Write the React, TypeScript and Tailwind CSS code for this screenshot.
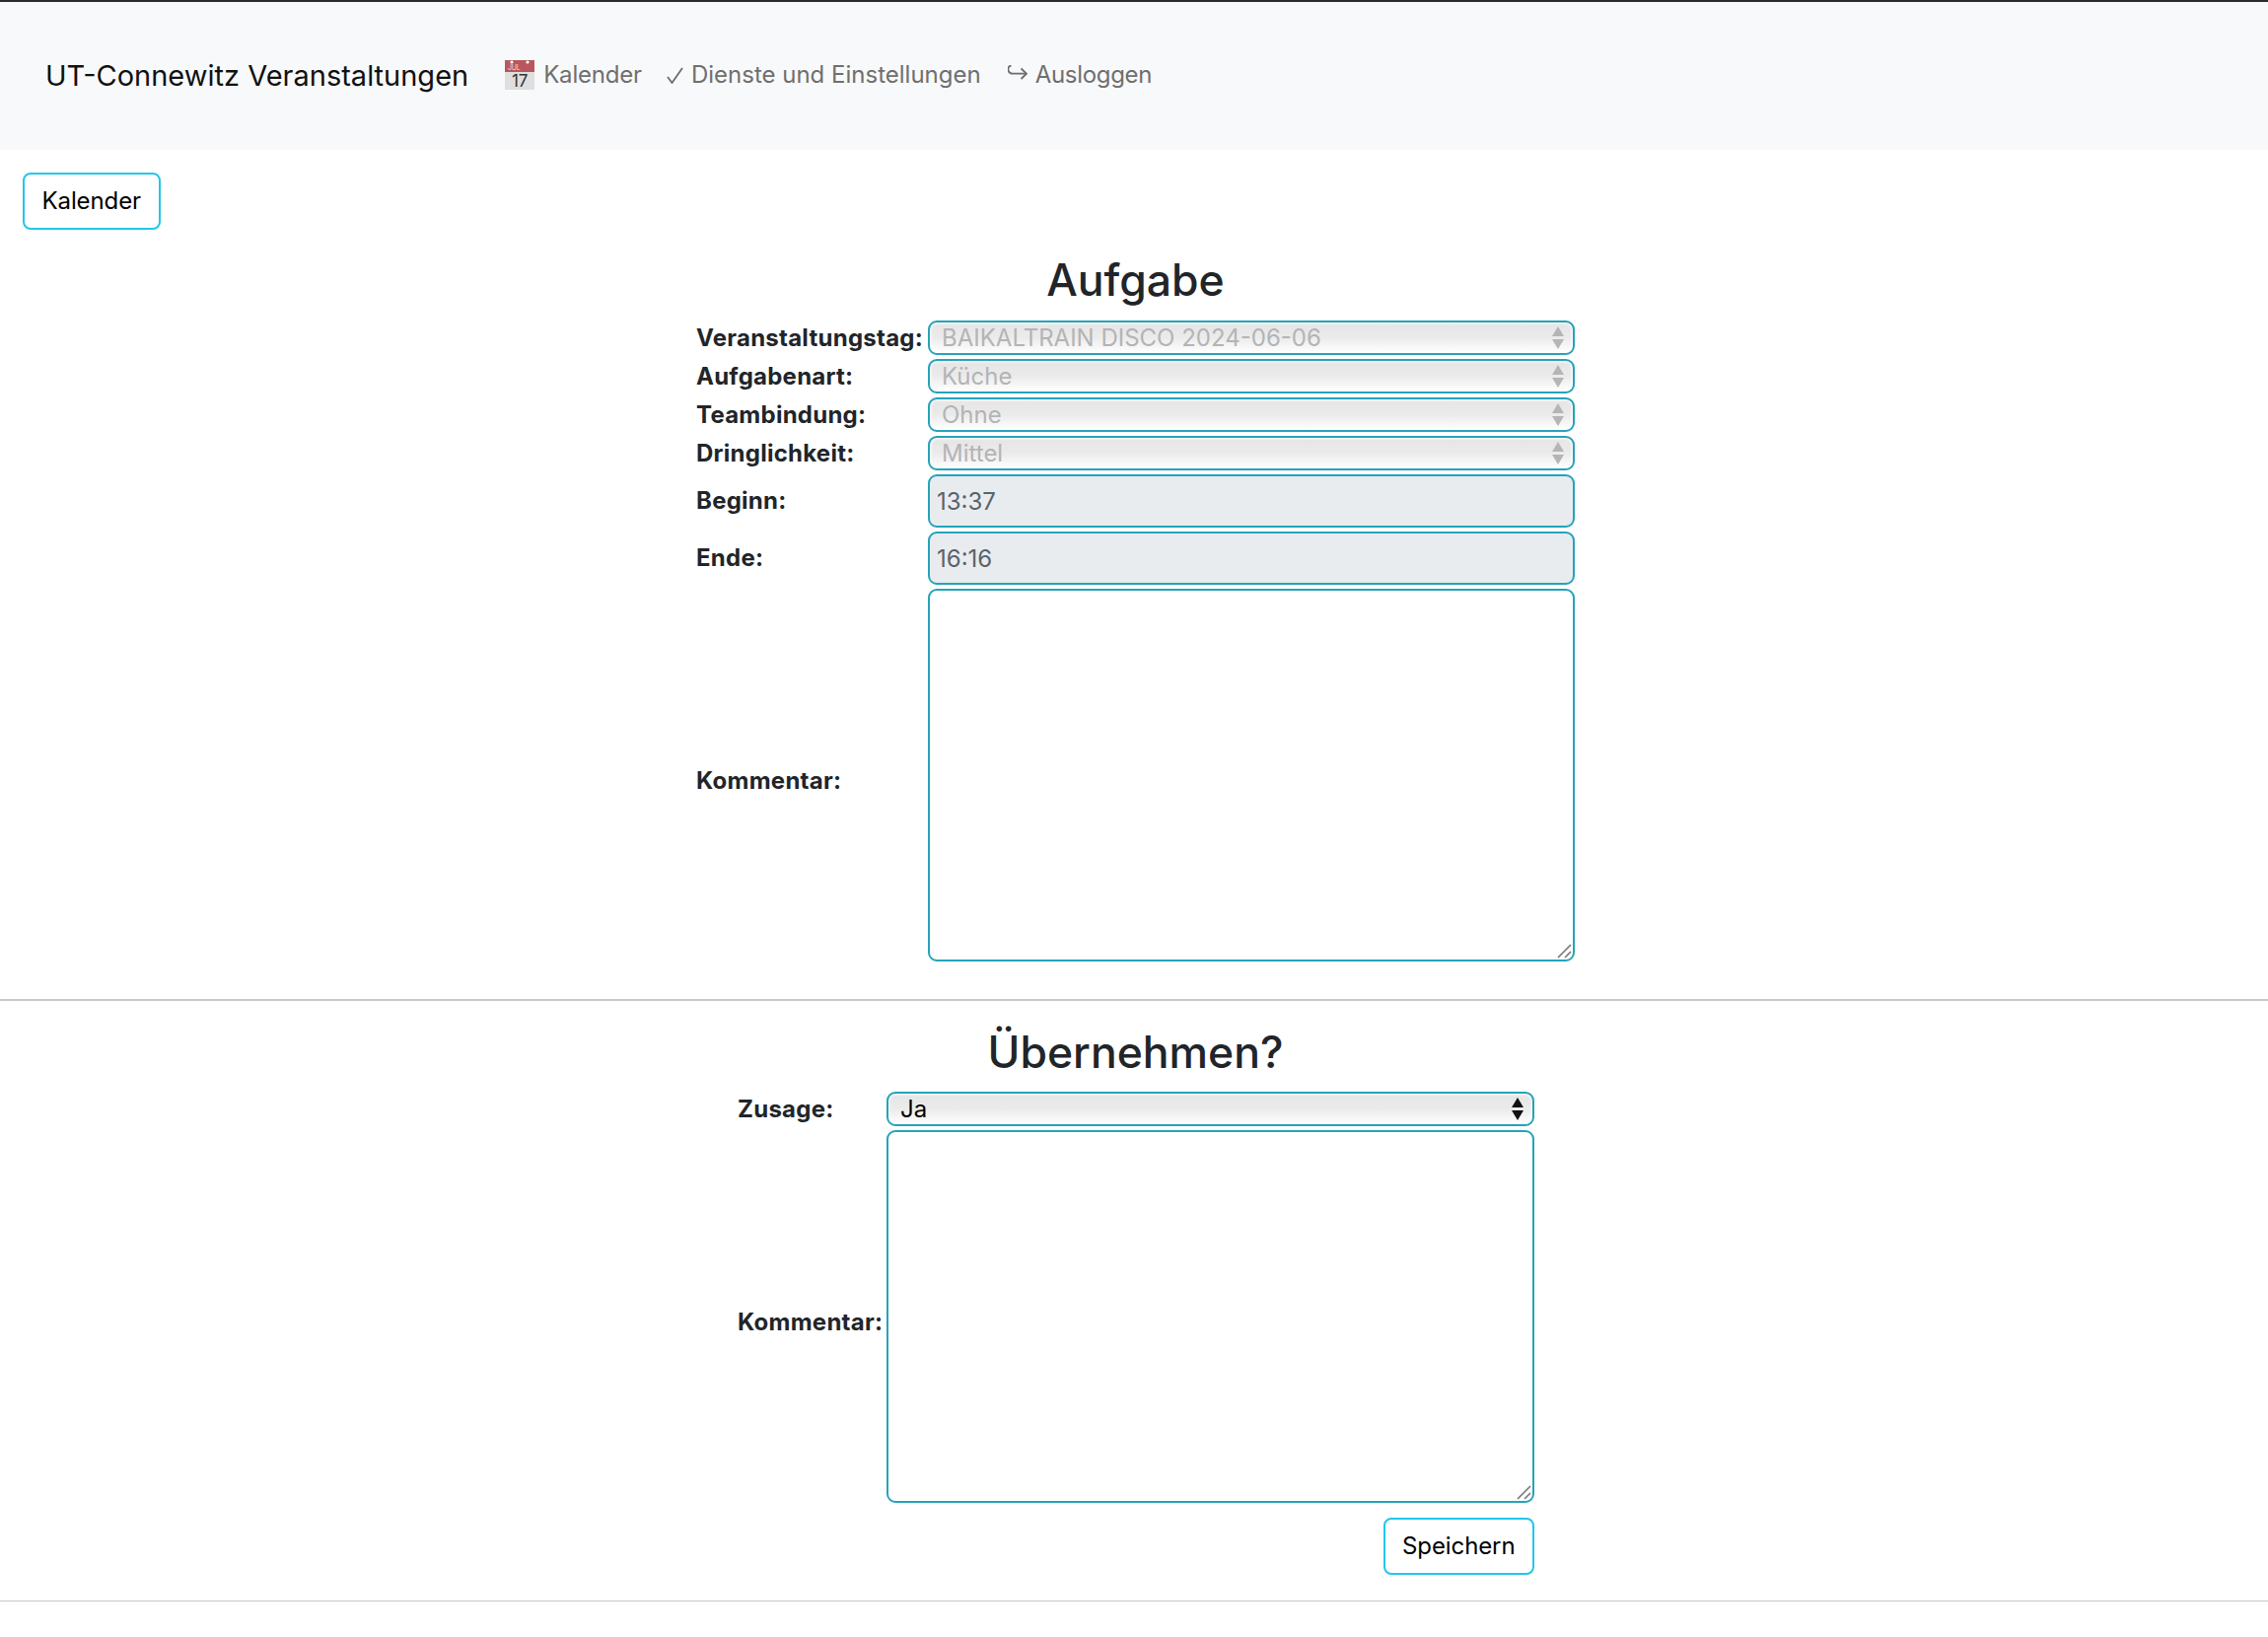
const selectClass =
  "block w-full h-full appearance-none rounded-[9px] border-2 border-[#25a3ba] bg-gradient-to-b from-[#e5e5e5] via-[#ebebeb] via-50% to-white pl-[12px] pr-10 text-[24px] leading-none shadow-[inset_0_0_3px_1px_#ffffff] outline-none";

function Arrows({ color }: { color: string }) {
  return (
    <svg
      className="absolute right-[11px] top-[6px] pointer-events-none"
      width="12"
      height="23"
      viewBox="0 0 12 23"
    >
      <path d="M6 0 L12 10 L0 10 Z M0 13 L12 13 L6 23 Z" fill={color} />
    </svg>
  );
}

function Label({ children, low }: { children: React.ReactNode; low?: boolean }) {
  return (
    <label
      className={
        "flex items-center text-[24px] font-bold tracking-[0.25px] text-[#212529] leading-none" +
        (low ? " pt-[12px]" : "")
      }
    >
      {children}
    </label>
  );
}

function Select({ value, disabled }: { value: string; disabled?: boolean }) {
  return (
    <div className="relative h-[35px]">
      <select
        disabled={disabled}
        defaultValue={value}
        className={selectClass + (disabled ? " text-[#b4b4b4]" : " text-black")}
      >
        <option>{value}</option>
      </select>
      <Arrows color={disabled ? "#b5b5b5" : "#111111"} />
    </div>
  );
}

function Input({ value }: { value: string }) {
  return (
    <input
      disabled
      value={value}
      readOnly
      className="block w-full h-[54px] rounded-[9px] border-2 border-[#25a3ba] bg-[#e9ecef] px-[7px] text-[24px] text-[#59636d] outline-none"
    />
  );
}

function Comment() {
  return (
    <div className="relative">
      <textarea className="block w-full h-[378px] resize-none rounded-[9px] border-2 border-[#25a3ba] bg-white outline-none" />
      {/* resize grip, the browser's own one is much smaller */}
      <svg
        className="absolute right-[3px] bottom-[3px] pointer-events-none"
        width="15"
        height="15"
        viewBox="0 0 15 15"
        stroke="#777777"
        strokeWidth="1.6"
      >
        <path d="M1 14 L14 1 M8 14 L14 8" />
      </svg>
    </div>
  );
}

function OutlineButton({ children }: { children: React.ReactNode }) {
  return (
    <button className="h-[58px] rounded-[8px] border-2 border-[#22c7ea] bg-white px-[17.5px] text-[24px] tracking-[-0.1px] text-black">
      {children}
    </button>
  );
}

function CalendarIcon() {
  return (
    <svg className="overflow-visible" width="30" height="30" viewBox="0 0 30 30">
      <rect x="0" y="0" width="30" height="30" fill="#dfdfdf" />
      <rect x="0" y="0" width="30" height="12" fill="#b8585c" />
      <circle cx="7" cy="2" r="1.6" fill="#ffffff" />
      <circle cx="23" cy="2" r="1.6" fill="#ffffff" />
      <text x="3" y="10" fontSize="7" fill="#f3dcdc" fontFamily="Inter, sans-serif">JUL</text>
      <text x="15" y="27" fontSize="17" textAnchor="middle" fill="#333333" fontFamily="Inter, sans-serif">17</text>
    </svg>
  );
}

function CheckIcon() {
  return (
    <svg width="17" height="17" viewBox="0 0 17 17" fill="none" stroke="#6c6c6c" strokeWidth="1.8">
      <path d="M1 10 L5.5 16 L16 1" />
    </svg>
  );
}

function LogoutIcon() {
  return (
    <svg width="20" height="15" viewBox="0 0 20 15" fill="none" stroke="#6c6c6c" strokeWidth="1.8">
      <path d="M3.5 0.5 C0.5 1 0 3 0.8 6 C1.5 8 3 8.7 5 8.7 L18.5 8.7" />
      <path d="M13.5 3.5 L19 8.7 L13.5 14" />
    </svg>
  );
}

export default function App() {
  return (
    <div className="min-h-[1660px] bg-white font-['Inter',sans-serif]">
      <nav className="h-[152px] border-t-2 border-[#2b2b2b] bg-[#f8f9fa] flex items-center pl-[46px] pb-[1px]">
        <a className="text-[29px] leading-none text-[#111111]">UT-Connewitz Veranstaltungen</a>
        <div className="flex items-center text-[24px] leading-none text-[#6f6f6f] ml-[37px] -mt-[1px]">
          <a className="flex items-center gap-[9px] tracking-[-0.2px]">
            <CalendarIcon />
            Kalender
          </a>
          <a className="flex items-center gap-[8px] ml-[25px]">
            <CheckIcon />
            Dienste und Einstellungen
          </a>
          <a className="flex items-center gap-[8px] ml-[27px] tracking-[-0.3px]">
            <span className="-mt-[5px]">
              <LogoutIcon />
            </span>
            Ausloggen
          </a>
        </div>
      </nav>

      <main>
        <div className="pl-[23px] pt-[23px]">
          <OutlineButton>Kalender</OutlineButton>
        </div>

        <h2 className="mt-[24px] pl-[3px] text-center text-[44.5px] leading-[54px] font-medium text-[#212529]">Aufgabe</h2>

        <form className="mt-[14px] ml-[706px] w-[891px] grid grid-cols-[235px_656px] gap-y-[4px]">
          <Label>Veranstaltungstag:</Label>
          <Select value="BAIKALTRAIN DISCO 2024-06-06" disabled />
          <Label>Aufgabenart:</Label>
          <Select value="Küche" disabled />
          <Label>Teambindung:</Label>
          <Select value="Ohne" disabled />
          <Label>Dringlichkeit:</Label>
          <Select value="Mittel" disabled />
          <Label>Beginn:</Label>
          <Input value="13:37" />
          <Label>Ende:</Label>
          <Input value="16:16" />
          <Label low>Kommentar:</Label>
          <Comment />
        </form>

        <hr className="mt-[38px] border-t-2 border-[#c8c8c8]" />

        <h2 className="mt-[25px] pl-[3px] text-center text-[44.5px] leading-[54px] font-medium text-[#212529]">Übernehmen?</h2>

        <form className="mt-[13px] ml-[748px] w-[808px] grid grid-cols-[151px_657px] gap-y-[4px]">
          <Label>Zusage:</Label>
          <Select value="Ja" />
          <Label low>Kommentar:</Label>
          <Comment />
          <div className="col-span-2 flex justify-end mt-[11px]">
            <OutlineButton>Speichern</OutlineButton>
          </div>
        </form>

        <hr className="mt-[26px] border-t border-[#c8c8c8]" />
      </main>
    </div>
  );
}
